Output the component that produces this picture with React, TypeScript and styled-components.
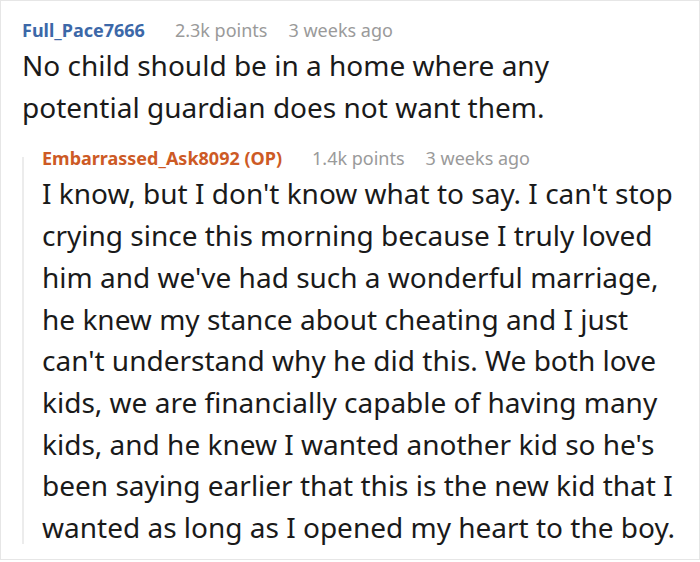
import styled, { createGlobalStyle } from 'styled-components';

const GlobalStyle = createGlobalStyle`
  html, body {
    margin: 0;
    padding: 0;
    background: #ffffff;
  }
  body {
    font-family: 'Noto Sans', 'Open Sans', sans-serif;
  }
`;

interface CommentData {
  author: string;
  op?: boolean;
  points: string;
  time: string;
  body: string;
}

const parent: CommentData = {
  author: 'Full_Pace7666',
  points: '2.3k points',
  time: '3 weeks ago',
  body: 'No child should be in a home where any potential guardian does not want them.',
};

const reply: CommentData = {
  author: 'Embarrassed_Ask8092 (OP)',
  op: true,
  points: '1.4k points',
  time: '3 weeks ago',
  body: "I know, but I don't know what to say. I can't stop crying since this morning because I truly loved him and we've had such a wonderful marriage, he knew my stance about cheating and I just can't understand why he did this. We both love kids, we are financially capable of having many kids, and he knew I wanted another kid so he's been saying earlier that this is the new kid that I wanted as long as I opened my heart to the boy.",
};

const CommentBlock = ({ data, maxWidth }: { data: CommentData; maxWidth?: number }) => (
  <Comment>
    <Meta>
      <Author $op={data.op}>{data.author}</Author>
      <Info>{data.points}</Info>
      <Info>{data.time}</Info>
    </Meta>
    <Body $maxWidth={maxWidth}>{data.body}</Body>
  </Comment>
);

const App = () => {
  return (
    <>
      <GlobalStyle />
      <Card>
        <CommentBlock data={parent} maxWidth={600} />
        <Thread>
          <ThreadLine />
          <CommentBlock data={reply} />
        </Thread>
      </Card>
    </>
  );
};

const Card = styled.div`
  box-sizing: border-box;
  width: 700px;
  height: 560px;
  padding: 13px 20px 0 21px;
  border: 1px solid #e6e6e6;
  background: #ffffff;
`;

const Comment = styled.div`
  display: flex;
  flex-direction: column;
  min-width: 0;
  flex: 1;
`;

const Meta = styled.div`
  display: flex;
  align-items: center;
  gap: 21px;
  height: 31px;
  white-space: nowrap;
`;

const Author = styled.span<{ $op?: boolean }>`
  margin-right: 9px;
  font-size: 18px;
  font-weight: 700;
  color: ${({ $op }) => ($op ? '#cd5a25' : '#3c68a8')};
`;

const Info = styled.span`
  font-size: 18px;
  color: #9a9a9a;
`;

const Body = styled.p<{ $maxWidth?: number }>`
  margin: 0;
  max-width: ${({ $maxWidth }) => ($maxWidth ? `${$maxWidth}px` : 'none')};
  font-size: 28px;
  line-height: 41.7px;
  color: #1a1a1a;
`;

const Thread = styled.div`
  display: flex;
  gap: 18px;
  margin-top: 14px;
`;

const ThreadLine = styled.div`
  flex: 0 0 2px;
  margin: 15px 0 5px;
  background: #ececec;
`;

export default App;
